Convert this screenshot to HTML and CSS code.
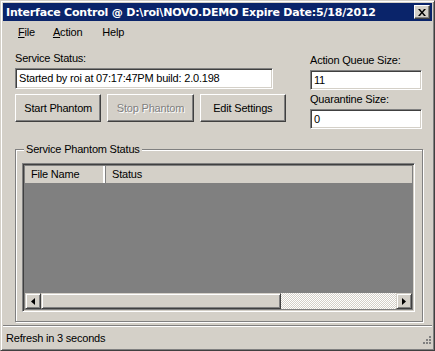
FILE: index.html
```html
<!DOCTYPE html>
<html>
<head>
<meta charset="utf-8">
<link rel="stylesheet" href="styles.css">
</head>
<body>
<div class="window">
  <div class="titlebar">
    <span class="title">Interface Control @ D:\roi\NOVO.DEMO Expire Date:5/18/2012</span>
    <span class="close"><svg width="8" height="7" viewBox="0 0 8 7"><path d="M0 0h2l2 2.5L6 0h2L5 3.5 8 7H6L4 4.5 2 7H0l3-3.5z" fill="#000"/></svg></span>
  </div>
  <div class="menubar">
    <span class="menu"><u>F</u>ile</span>
    <span class="menu"><u>A</u>ction</span>
    <span class="menu help">Help</span>
  </div>
  <div class="content">
    <div class="top">
      <div class="left">
        <div class="label">Service Status:</div>
        <div class="textbox wide">Started by roi at 07:17:47PM build: 2.0.198</div>
        <div class="buttons">
          <div class="button">Start Phantom</div>
          <div class="button disabled">Stop Phantom</div>
          <div class="button">Edit Settings</div>
        </div>
      </div>
      <div class="right">
        <div class="label">Action Queue Size:</div>
        <div class="textbox small">11</div>
        <div class="label second">Quarantine Size:</div>
        <div class="textbox small">0</div>
      </div>
    </div>
    <div class="group">
      <div class="legend">Service Phantom Status</div>
      <div class="listview">
        <div class="header">
          <div class="col c1">File Name</div>
          <div class="col c2">Status</div>
        </div>
        <div class="listbody"></div>
        <div class="hscroll">
          <div class="arrow"><svg width="4" height="7" viewBox="0 0 4 7"><path d="M4 0v7L0 3.5z" fill="#000"/></svg></div>
          <div class="thumb"></div>
          <div class="track"></div>
          <div class="arrow"><svg width="4" height="7" viewBox="0 0 4 7"><path d="M0 0v7l4-3.5z" fill="#000"/></svg></div>
        </div>
      </div>
    </div>
  </div>
  <div class="statusbar">
    <span>Refresh in 3 seconds</span>
    <svg class="grip" width="12" height="12" viewBox="0 0 12 12">
      <g fill="#fff"><rect x="10" y="2" width="1" height="1"/><rect x="7" y="5" width="1" height="1"/><rect x="10" y="5" width="1" height="1"/><rect x="4" y="8" width="1" height="1"/><rect x="7" y="8" width="1" height="1"/><rect x="10" y="8" width="1" height="1"/></g>
      <g fill="#808080"><rect x="9" y="1" width="2" height="2"/><rect x="6" y="4" width="2" height="2"/><rect x="9" y="4" width="2" height="2"/><rect x="3" y="7" width="2" height="2"/><rect x="6" y="7" width="2" height="2"/><rect x="9" y="7" width="2" height="2"/></g>
    </svg>
  </div>
</div>
</body>
</html>
```

FILE: styles.css
```css
html, body { margin: 0; padding: 0; }
body { width: 435px; height: 351px; overflow: hidden; font-family: "Liberation Sans", Arial, sans-serif; font-size: 11px; letter-spacing: -0.2px; color: #000; }
.window {
  box-sizing: border-box; width: 435px; height: 351px;
  background: #d4d0c8;
  border-top: 1px solid #d4d0c8; border-left: 1px solid #d4d0c8;
  border-right: 1px solid #404040; border-bottom: 1px solid #404040;
  box-shadow: inset 1px 1px #fff, inset -1px -1px #808080;
  padding: 2px;
  display: flex; flex-direction: column;
}
.titlebar {
  height: 18px; background: #0a246a; color: #fff;
  display: flex; align-items: center; justify-content: space-between;
  padding: 0 2px 0 3px; flex: none;
}
.title { font-family: "DejaVu Sans", Tahoma, sans-serif; font-weight: bold; font-size: 11px; letter-spacing: -0.2px; }
.close {
  width: 16px; height: 14px; box-sizing: border-box; background: #d4d0c8;
  border-top: 1px solid #fff; border-left: 1px solid #fff;
  border-right: 1px solid #404040; border-bottom: 1px solid #404040;
  box-shadow: inset -1px -1px #808080;
  display: flex; align-items: center; justify-content: center;
}
.menubar { height: 22px; display: flex; align-items: center; gap: 18px; padding-left: 15px; flex: none; background: #d4d0c8; }
.menu.help { margin-left: 2px; }
.content { flex: 1; padding: 8px 10px 0 12px; display: flex; flex-direction: column; }
.top { display: flex; justify-content: space-between; }
.left { width: 271px; }
.right { width: 112px; }
.label { height: 14px; line-height: 14px; margin-bottom: 3px; }
.right .label { margin-top: 2px; margin-bottom: 3px; }
.right .label.second { margin-top: 2px; }
.textbox {
  box-sizing: border-box; height: 20px; background: #fff;
  border-top: 1px solid #808080; border-left: 1px solid #808080;
  border-right: 1px solid #fff; border-bottom: 1px solid #fff;
  box-shadow: inset 1px 1px #404040, inset -1px -1px #d4d0c8;
  padding: 0 3px; line-height: 18px; white-space: nowrap; overflow: hidden;
}
.textbox.wide { width: 258px; height: 21px; line-height: 19px; }
.textbox.small { width: 112px; }
.buttons { display: flex; gap: 6px; margin-top: 5px; }
.button {
  box-sizing: border-box; width: 87px; height: 28px;
  border-top: 1px solid #fff; border-left: 1px solid #fff;
  border-right: 1px solid #404040; border-bottom: 1px solid #404040;
  box-shadow: inset -1px -1px #808080;
  display: flex; align-items: center; justify-content: center;
}
.button.disabled { color: #808080; text-shadow: 1px 1px #fff; }
.group {
  margin-top: 20px; height: 173px; box-sizing: border-box; width: 408px; flex: none;
  border: 1px solid #808080; box-shadow: inset 1px 1px #fff, 1px 1px #fff;
  position: relative; padding: 13px 7px 9px 6px;
}
.legend { position: absolute; top: -8px; left: 8px; background: #d4d0c8; padding: 0 2px; line-height: 14px; }
.listview {
  height: 100%; box-sizing: border-box;
  border-top: 1px solid #808080; border-left: 1px solid #808080;
  border-right: 1px solid #fff; border-bottom: 1px solid #fff;
  box-shadow: inset 1px 1px #404040, inset -1px -1px #d4d0c8;
  padding: 2px; display: flex; flex-direction: column; background: #808080;
}
.header { height: 17px; display: flex; background: #d4d0c8; flex: none; }
.col { box-sizing: border-box; line-height: 17px; padding-left: 6px;
  border-right: 1px solid #808080; box-shadow: inset -2px 0 #fff; }
.c1 { width: 81px; }
.c2 { border: none; box-shadow: none; }
.listbody { flex: 1; background: #808080; }
.hscroll { height: 16px; display: flex; flex: none; }
.arrow {
  width: 16px; height: 16px; box-sizing: border-box; background: #d4d0c8;
  border-top: 1px solid #d4d0c8; border-left: 1px solid #d4d0c8;
  border-right: 1px solid #404040; border-bottom: 1px solid #404040;
  box-shadow: inset 1px 1px #fff, inset -1px -1px #808080;
  display: flex; align-items: center; justify-content: center;
}
.thumb {
  width: 240px; box-sizing: border-box; background: #d4d0c8;
  border-top: 1px solid #d4d0c8; border-left: 1px solid #d4d0c8;
  border-right: 1px solid #404040; border-bottom: 1px solid #404040;
  box-shadow: inset 1px 1px #fff, inset -1px -1px #808080;
}
.track { flex: 1; background-color: #fff; background-image: repeating-conic-gradient(#d4d0c8 0 25%, #fff 0 50%); background-size: 2px 2px; }
.statusbar {
  height: 21px; flex: none; display: flex; align-items: center; justify-content: space-between;
  padding-left: 3px; border-top: 1px solid #fff; margin-top: 4px; box-shadow: 0 -1px #808080; position: relative;
}
.grip { align-self: flex-end; margin-bottom: 1px; margin-right: 0; }
```
